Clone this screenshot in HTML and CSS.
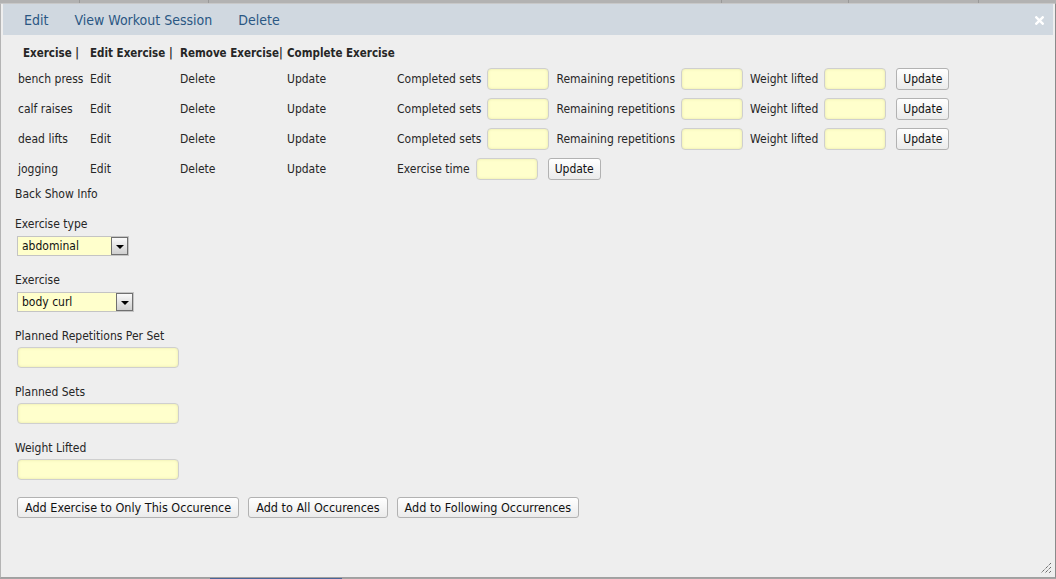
FILE: index.html
```html
<!DOCTYPE html>
<html>
<head>
<meta charset="utf-8">
<link rel="stylesheet" href="styles.css">
</head>
<body>
<div class="backdrop">
  <div class="cal-top">
    <div class="cell c1"></div><div class="cell c2"></div><div class="cell c3"></div><div class="cell c4"></div><div class="cell c5"></div><div class="cell c6"></div>
  </div>
  <div class="cal-bottom">
    <div class="bcell b1"></div><div class="bcell event"></div><div class="bcell b3"></div>
  </div>
</div>

<div class="dialog">
  <div class="titlebar">
    <nav class="tabs">
      <a class="tab">Edit</a>
      <a class="tab">View Workout Session</a>
      <a class="tab">Delete</a>
    </nav>
    <svg class="close" width="9" height="9" viewBox="0 0 9 9"><path d="M1.3 1.3 L7.7 7.7 M7.7 1.3 L1.3 7.7" stroke="#fff" stroke-width="2.4" stroke-linecap="square"/></svg>
  </div>

  <div class="content">
    <table class="exercises">
      <thead>
        <tr>
          <th class="col1 first">Exercise |</th>
          <th class="col2">Edit Exercise |</th>
          <th class="col3">Remove Exercise|</th>
          <th class="col4">Complete Exercise</th>
          <th></th>
        </tr>
      </thead>
      <tbody>
        <tr>
          <td class="col1 first">bench press</td>
          <td class="col2">Edit</td>
          <td class="col3">Delete</td>
          <td class="col4">Update</td>
          <td><div class="complete">
            <span class="lbl">Completed sets</span><span class="inp"></span>
            <span class="lbl">Remaining repetitions</span><span class="inp"></span>
            <span class="lbl">Weight lifted</span><span class="inp"></span>
            <span class="btn">Update</span>
          </div></td>
        </tr>
        <tr>
          <td class="col1 first">calf raises</td>
          <td class="col2">Edit</td>
          <td class="col3">Delete</td>
          <td class="col4">Update</td>
          <td><div class="complete">
            <span class="lbl">Completed sets</span><span class="inp"></span>
            <span class="lbl">Remaining repetitions</span><span class="inp"></span>
            <span class="lbl">Weight lifted</span><span class="inp"></span>
            <span class="btn">Update</span>
          </div></td>
        </tr>
        <tr>
          <td class="col1 first">dead lifts</td>
          <td class="col2">Edit</td>
          <td class="col3">Delete</td>
          <td class="col4">Update</td>
          <td><div class="complete">
            <span class="lbl">Completed sets</span><span class="inp"></span>
            <span class="lbl">Remaining repetitions</span><span class="inp"></span>
            <span class="lbl">Weight lifted</span><span class="inp"></span>
            <span class="btn">Update</span>
          </div></td>
        </tr>
        <tr>
          <td class="col1 first">jogging</td>
          <td class="col2">Edit</td>
          <td class="col3">Delete</td>
          <td class="col4">Update</td>
          <td><div class="complete">
            <span class="lbl">Exercise time</span><span class="inp"></span>
            <span class="btn">Update</span>
          </div></td>
        </tr>
      </tbody>
    </table>

    <div class="links">Back Show Info</div>

    <div class="field first-field">
      <div class="flabel">Exercise type</div>
      <div class="select sel-type"><span class="sel-text">abdominal</span><span class="arrow"><span class="tri"></span></span></div>
    </div>

    <div class="field">
      <div class="flabel">Exercise</div>
      <div class="select sel-ex"><span class="sel-text">body curl</span><span class="arrow"><span class="tri"></span></span></div>
    </div>

    <div class="field">
      <div class="flabel">Planned Repetitions Per Set</div>
      <div class="textbox"></div>
    </div>

    <div class="field">
      <div class="flabel">Planned Sets</div>
      <div class="textbox"></div>
    </div>

    <div class="field">
      <div class="flabel">Weight Lifted</div>
      <div class="textbox"></div>
    </div>

    <div class="actions">
      <span class="btn big">Add Exercise to Only This Occurence</span>
      <span class="btn big">Add to All Occurences</span>
      <span class="btn big">Add to Following Occurrences</span>
    </div>
  </div>

  <svg class="resize" width="12" height="12" viewBox="0 0 12 12">
    <path d="M11 1 L1 11 M11 5 L5 11 M11 9 L9 11" stroke="#333" stroke-width="1" stroke-dasharray="1 1"/>
  </svg>
</div>
</body>
</html>
```

FILE: styles.css
```css
html, body {
  margin: 0;
  padding: 0;
}
body {
  width: 1056px;
  height: 579px;
  overflow: hidden;
  background: #b2b2b2;
  font-family: "DejaVu Sans Condensed", "DejaVu Sans", sans-serif;
  font-size: 12px;
  color: #262626;
  position: relative;
}

.backdrop {
  height: 579px;
  display: flex;
  flex-direction: column;
  justify-content: space-between;
}
.cal-top {
  height: 3px;
  display: flex;
}
.cell {
  border-right: 1px solid #999;
  height: 3px;
}
.c1 { width: 79px; }
.c2 { width: 128px; }
.c3 { width: 512px; }
.c4 { width: 126px; }
.c5 { width: 129px; }
.c6 { flex: 1; border-right: 0; }

.cal-bottom {
  height: 2px;
  display: flex;
}
.bcell { height: 2px; }
.b1 { width: 210px; background: #a4a4a4; }
.event { width: 132px; background: #4a6598; }
.b3 { flex: 1; background: #a4a4a4; }

.dialog {
  position: absolute;
  left: 0;
  top: 3px;
  width: 1050px;
  height: 573px;
  border: 1px solid #a0a0a0;
  border-top-color: #c8c8c8;
  border-left-color: #b4b4b4;
  border-right-color: #8a8a8a;
  padding: 0 2px;
  background: #eeeeee;
}

.titlebar {
  height: 31px;
  background: #d0d8e0;
  display: flex;
  align-items: center;
  justify-content: space-between;
  padding: 0 9px 0 21px;
}
.tabs {
  display: flex;
  gap: 26px;
}
.tab {
  font-size: 14px;
  color: #2a5783;
  padding-top: 1px;
}
.close {
  display: block;
  margin-top: 1px;
}

.content {
  padding: 9px 12px 0 12px;
}

.exercises {
  border-collapse: collapse;
  border-spacing: 0;
}
.exercises th {
  text-align: left;
  font-weight: bold;
  font-size: 11.5px;
  line-height: 18px;
  padding: 0 0 2px 0;
  white-space: nowrap;
}
.exercises th.first {
  padding-left: 8px;
}
.exercises td {
  height: 30px;
  padding: 0;
  white-space: nowrap;
}
.exercises td.first {
  padding-left: 3px;
}
.col1 { width: 72px; }
.col2 { width: 90px; }
.col3 { width: 107px; }
.col4 { width: 110px; }
th.col1 { width: 67px; }

.complete {
  display: flex;
  align-items: center;
}
.lbl {
  white-space: nowrap;
}
.inp {
  width: 60px;
  height: 20px;
  border: 1px solid #cfcfcf;
  border-radius: 4px;
  background: #ffffcc;
  box-shadow: inset 0 0 3px #e6e6a8;
  margin: 0 7px 0 6px;
}
.btn {
  display: inline-flex;
  align-items: center;
  justify-content: center;
  height: 20px;
  padding: 0 5px;
  border: 1px solid #b2b2b2;
  border-radius: 3px;
  background: linear-gradient(#ffffff, #ebebeb);
  color: #111;
  white-space: nowrap;
}
.complete .btn {
  width: 41px;
  margin-left: 3px;
}

.links {
  line-height: 16px;
  margin-top: 2px;
}

.field {
  margin-top: 16px;
}
.first-field {
  margin-top: 14px;
}
.flabel {
  line-height: 16px;
}

.select {
  margin: 4px 0 0 2px;
  height: 18px;
  border: 1px solid #c4c4c4;
  background: #ffffcc;
  display: flex;
  align-items: stretch;
  justify-content: space-between;
}
.sel-type { width: 110px; }
.sel-ex { width: 115px; }
.sel-text {
  padding-left: 4px;
  line-height: 18px;
  color: #111;
}
.arrow {
  width: 15px;
  border: 1px solid #707070;
  background: linear-gradient(#fafafa, #cfcfcf);
  display: flex;
  align-items: center;
  justify-content: center;
}
.tri {
  width: 0;
  height: 0;
  border-left: 4px solid transparent;
  border-right: 4px solid transparent;
  border-top: 4px solid #000;
  margin-top: 1px;
}

.textbox {
  margin: 3px 0 0 2px;
  width: 160px;
  height: 19px;
  border: 1px solid #cfcfcf;
  border-radius: 4px;
  background: #ffffcc;
  box-shadow: inset 0 0 3px #e6e6a8;
}

.actions {
  margin-top: 17px;
  padding-left: 2px;
  display: flex;
  gap: 9px;
}
.btn.big {
  height: 19px;
  padding: 0 7px;
  font-size: 12.5px;
}

.resize {
  position: absolute;
  right: 3px;
  bottom: 3px;
}
```
